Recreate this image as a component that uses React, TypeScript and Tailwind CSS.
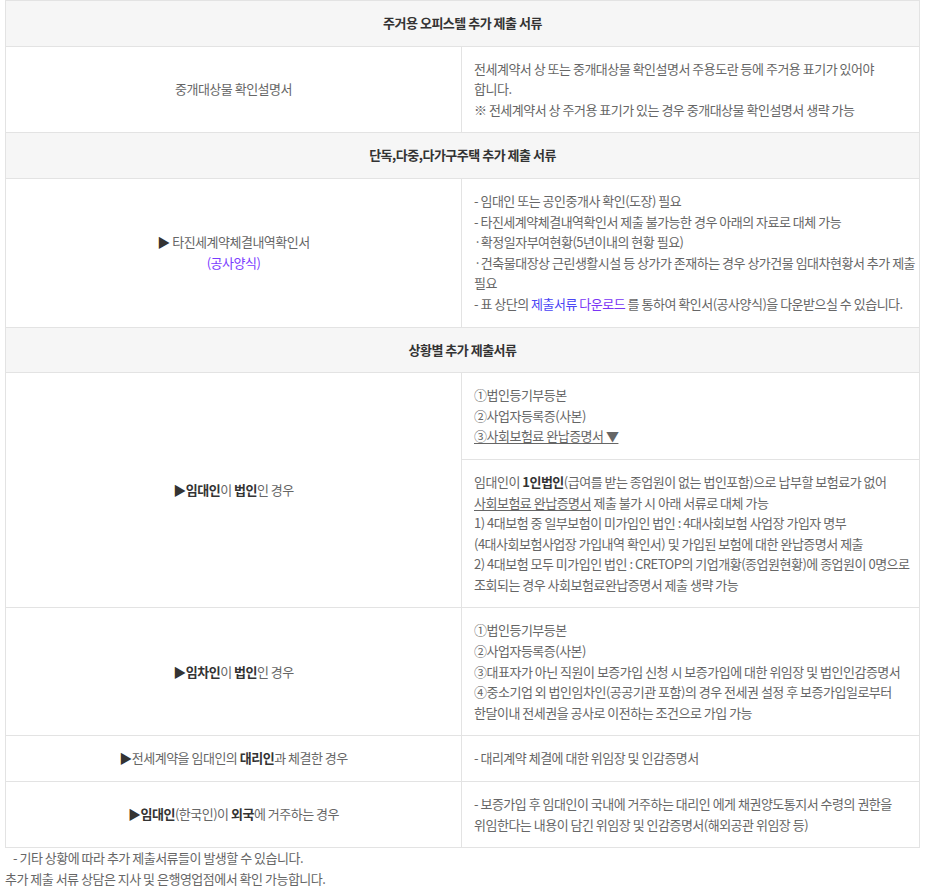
export default function App() {
  const th = "bg-[#f6f6f6] border border-[#e3e3e3] py-3 text-center font-semibold text-[#333]";
  const td = "border border-[#e3e3e3] px-3 py-3 align-middle whitespace-nowrap";
  const tdLeft = "border border-[#e3e3e3] px-3 py-3 text-center align-middle";

  return (
    <div
      className="min-h-screen bg-white pl-[5px] text-[13px] leading-[20.6px] tracking-[-0.5px] text-[#666]"
      style={{ fontFamily: '"Noto Sans CJK KR", "Noto Sans", sans-serif' }}
    >
      <table className="w-[915px] border-collapse table-fixed">
        <colgroup>
          <col className="w-[456px]" />
          <col />
        </colgroup>
        <tbody>
          <tr>
            <th colSpan={2} className={th}>주거용 오피스텔 추가 제출 서류</th>
          </tr>
          <tr>
            <td className={tdLeft}>중개대상물 확인설명서</td>
            <td className={td}>
              전세계약서 상 또는 중개대상물 확인설명서 주용도란 등에 주거용 표기가 있어야
              <br />
              합니다.
              <br />
              ※ 전세계약서 상 주거용 표기가 있는 경우 중개대상물 확인설명서 생략 가능
            </td>
          </tr>

          <tr>
            <th colSpan={2} className={th}>단독,다중,다가구주택 추가 제출 서류</th>
          </tr>
          <tr>
            <td className={tdLeft}>
              <span className="text-[#333]">▶</span> 타진세계약체결내역확인서
              <br />
              <span className="text-[#7a3cff]">(공사양식)</span>
            </td>
            <td className={td}>
              - 임대인 또는 공인중개사 확인(도장) 필요
              <br />
              - 타진세계약체결내역확인서 제출 불가능한 경우 아래의 자료로 대체 가능
              <br />
              ·확정일자부여현황(5년이내의 현황 필요)
              <br />
              ·건축물대장상 근린생활시설 등 상가가 존재하는 경우 상가건물 임대차현황서 추가 제출
              <br />
              필요
              <br />
              - 표 상단의 <span className="text-[#4b45f5]">제출서류</span>{" "}
              <span className="text-[#7a35f5]">다운로드</span> 를 통하여 확인서(공사양식)을 다운받으실 수 있습니다.
            </td>
          </tr>

          <tr>
            <th colSpan={2} className={th}>상황별 추가 제출서류</th>
          </tr>
          <tr>
            <td rowSpan={2} className={tdLeft}>
              <span className="text-[#333]">▶</span>
              <b className="font-bold text-[#333]">임대인</b>이 <b className="font-bold text-[#333]">법인</b>인 경우
            </td>
            <td className={td}>
              ①법인등기부등본
              <br />
              ②사업자등록증(사본)
              <br />
              <span className="underline underline-offset-2">③사회보험료 완납증명서 ▼</span>
            </td>
          </tr>
          <tr>
            <td className={td}>
              임대인이 <b className="font-bold text-[#333]">1인법인</b>(급여를 받는 종업원이 없는 법인포함)으로 납부할 보험료가 없어
              <br />
              <span className="underline underline-offset-2">사회보험료 완납증명서</span> 제출 불가 시 아래 서류로 대체 가능
              <br />
              1) 4대보험 중 일부보험이 미가입인 법인 : 4대사회보험 사업장 가입자 명부
              <br />
              (4대사회보험사업장 가입내역 확인서) 및 가입된 보험에 대한 완납증명서 제출
              <br />
              2) 4대보험 모두 미가입인 법인 : CRETOP의 기업개황(종업원현황)에 종업원이 0명으로
              <br />
              조회되는 경우 사회보험료완납증명서 제출 생략 가능
            </td>
          </tr>

          <tr>
            <td className={tdLeft}>
              <span className="text-[#333]">▶</span>
              <b className="font-bold text-[#333]">임차인</b>이 <b className="font-bold text-[#333]">법인</b>인 경우
            </td>
            <td className={td}>
              ①법인등기부등본
              <br />
              ②사업자등록증(사본)
              <br />
              ③대표자가 아닌 직원이 보증가입 신청 시 보증가입에 대한 위임장 및 법인인감증명서
              <br />
              ④중소기업 외 법인임차인(공공기관 포함)의 경우 전세권 설정 후 보증가입일로부터
              <br />
              한달이내 전세권을 공사로 이전하는 조건으로 가입 가능
            </td>
          </tr>

          <tr>
            <td className={tdLeft}>
              <span className="text-[#333]">▶</span>전세계약을 임대인의 <b className="font-bold text-[#333]">대리인</b>과 체결한 경우
            </td>
            <td className={td}>- 대리계약 체결에 대한 위임장 및 인감증명서</td>
          </tr>

          <tr>
            <td className={tdLeft}>
              <span className="text-[#333]">▶</span>
              <b className="font-bold text-[#333]">임대인</b>(한국인)이 <b className="font-bold text-[#333]">외국</b>에 거주하는 경우
            </td>
            <td className={td}>
              - 보증가입 후 임대인이 국내에 거주하는 대리인 에게 채권양도통지서 수령의 권한을
              <br />
              위임한다는 내용이 담긴 위임장 및 인감증명서(해외공관 위임장 등)
            </td>
          </tr>
        </tbody>
      </table>

      <div>
        <p className="pl-2">- 기타 상황에 따라 추가 제출서류들이 발생할 수 있습니다.</p>
        <p>추가 제출 서류 상담은 지사 및 은행영업점에서 확인 가능합니다.</p>
      </div>
    </div>
  );
}
